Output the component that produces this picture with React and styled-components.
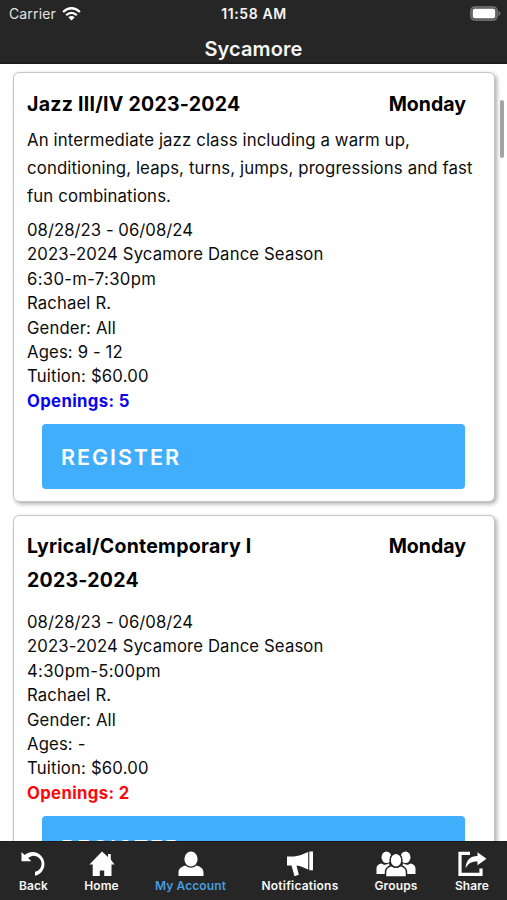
import React from "react";
import styled, { createGlobalStyle } from "styled-components";

const GlobalStyle = createGlobalStyle`
  * { box-sizing: border-box; }
  body { margin: 0; background: #fff; overflow: hidden; }
`;

const Screen = styled.div`
  display: flex;
  flex-direction: column;
  width: 507px;
  height: 900px;
  overflow: hidden;
  background: #fff;
  color: #0c0c0c;
  font-family: Inter, "Liberation Sans", sans-serif;
`;

const Header = styled.header`
  flex: none;
  height: 64px;
  background: #262626;
  border-bottom: 2px solid #1c1c1c;
  color: #f5f5f5;
`;

const StatusBar = styled.div`
  display: grid;
  grid-template-columns: 1fr auto 1fr;
  align-items: center;
  height: 27px;
  padding: 0 6px 0 9px;
  font-size: 14px;
`;

const Carrier = styled.div`
  display: flex;
  align-items: center;
  gap: 6px;
  letter-spacing: 0.14px;
  color: #e2e2e2;
`;

const Clock = styled.div`
  font-size: 14px;
  font-weight: 600;
  letter-spacing: 0.6px;
  margin-left: -2px;
`;

const Battery = styled.svg`
  justify-self: end;
  display: block;
`;

const Title = styled.h1`
  margin: 5px 0 0;
  text-align: center;
  font-size: 20px;
  line-height: 34px;
  font-weight: 600;
  letter-spacing: 0.1px;
`;

const Content = styled.main`
  position: relative;
  flex: 1;
  min-height: 0;
  overflow: hidden;
  padding: 8px 12px 0 13px;
`;

const ScrollThumb = styled.div`
  position: absolute;
  top: 36px;
  right: 3px;
  width: 4px;
  height: 58px;
  border-radius: 2px;
  background: #a3a3a3;
`;

const Card = styled.article`
  height: 430px;
  margin-bottom: 13px;
  padding: ${(p) => p.$top}px 20px 0 13px;
  border: 1px solid #c6c6c6;
  border-radius: 6px;
  background: #fff;
  box-shadow: 2px 2px 4px rgba(0, 0, 0, 0.32);
`;

const CardHead = styled.div`
  display: flex;
  justify-content: space-between;
  padding-right: 8px;
  font-size: 19.5px;
  line-height: 34px;
  font-weight: 700;
  color: #000;
`;

const ClassName = styled.h2`
  width: 250px;
  margin: 0;
  font: inherit;
  letter-spacing: 0.26px;
`;

const Day = styled.div`
  letter-spacing: 0;
`;

const Description = styled.p`
  margin: 5px 0 0;
  font-size: 16.8px;
  line-height: 28px;
  letter-spacing: 0.12px;
  white-space: nowrap;
  height: 84px;
`;

const Details = styled.div`
  margin-top: ${(p) => p.$gap}px;
  font-size: 16.7px;
  line-height: 24.4px;
`;

const Detail = styled.div`
  letter-spacing: ${(p) => p.$tracking ?? 0.14}px;
`;

const Openings = styled.div`
  font-weight: 700;
  letter-spacing: 0.36px;
  color: ${(p) => p.$color};
`;

const Register = styled.button`
  display: flex;
  align-items: center;
  width: 423px;
  height: 65px;
  margin: 11px 0 0 15px;
  padding: 0 19px ${(p) => p.$lift}px;
  border: 0;
  border-radius: 4px;
  background: #41aefc;
  color: #fff;
  font: 600 21.5px/30px Inter, sans-serif;
  letter-spacing: 1.95px;
`;

const TabBar = styled.nav`
  flex: none;
  display: grid;
  grid-template-columns: 67px 69px 109px 110px 82px 70px;
  height: 59px;
  background: #262626;
  border-top: 1px solid #1c1c1c;
`;

const Tab = styled.a`
  display: flex;
  flex-direction: column;
  align-items: center;
  padding-top: 9px;
  color: ${(p) => (p.$active ? "#469dde" : "#f7f7f7")};
  font-size: 12px;
  line-height: 16px;
  font-weight: 600;
  letter-spacing: ${(p) => p.$tracking}px;
  white-space: nowrap;
`;

const TabIcon = styled.svg`
  display: block;
  height: 26px;
  margin-bottom: 1px;
  fill: #fff;
`;

const WifiIcon = () => (
  <svg width="19" height="14" viewBox="0 0 19 14" fill="none" stroke="#fff" strokeWidth="2.3">
    <path d="M1.1 5 Q9.5 -2.6 17.9 5" />
    <path d="M4.2 8.2 Q9.5 3.6 14.8 8.2" />
    <path d="M6.3 10.2 Q9.5 7.6 12.7 10.2 L9.5 13.5Z" fill="#fff" stroke="none" />
  </svg>
);

const icons = {
  back: (
    <TabIcon width="26" viewBox="0 0 26 26">
      <path d="M.5 1 3.6 4A12 12 0 1 1 14 24.8V20.7A8 8 0 1 0 7.2 6.9L10.3 10.2H.5Z" />
    </TabIcon>
  ),
  home: (
    <TabIcon width="26" viewBox="0 0 26 26">
      <path d="M13 .5 19 6V3h2.8v5.6L25.5 13.5h-3V25h-7.3v-5.5h-4.4V25H3.7V13.5H.5Z" />
    </TabIcon>
  ),
  account: (
    <TabIcon width="26" viewBox="0 0 26 26">
      <ellipse cx="13" cy="8" rx="6.6" ry="7.6" />
      <path d="M.5 25v-3.5c0-4 3-5.7 7-7 3.5 3 7.5 3 11 0 4 1.3 7 3 7 7V25Z" />
    </TabIcon>
  ),
  notifications: (
    <TabIcon width="28" viewBox="0 0 28 26">
      <path d="M1 5.5h7C14 5 18 2.5 22.2 1v17.5C18 16.8 14.5 14.8 10.5 14.5l2.3 9.2L8.5 25.3 5.5 14.5H1ZM23.3.5H27v18.7h-3.7Z" />
    </TabIcon>
  ),
  groups: (
    <TabIcon width="40" viewBox="0 0 40 26">
      <ellipse cx="10.5" cy="6.3" rx="5" ry="5.8" />
      <ellipse cx="29.5" cy="6.3" rx="5" ry="5.8" />
      <path d="M.5 23v-5.5c0-3 2.5-4.5 5-5 3 2.2 5.5 1 7.5-.2L15 23ZM39.5 23v-5.5c0-3-2.5-4.5-5-5-3 2.2-5.5 1-7.5-.2L25 23Z" />
      <g stroke="#262626" strokeWidth="1.5">
        <path d="M9.5 26V21c0-4 2-5.3 6-6.4 3 2.2 6 2.2 9 0 4 1.1 6 2.4 6 6.4v5Z" />
        <ellipse cx="20" cy="9.3" rx="5.9" ry="7" />
      </g>
    </TabIcon>
  ),
  share: (
    <TabIcon width="30" viewBox="0 0 30 26">
      <path d="M13 2.3H3V23.3H24V17.5" fill="none" stroke="#fff" strokeWidth="3.2" />
      <path d="M20.5 1.2 29.5 7.7 20.5 14.3v-3.8c-5.5 0-9 1-12 7C9 9.5 13 5 20.5 5Z" />
    </TabIcon>
  ),
};

const tabs = [
  ["back", "Back", 0.05],
  ["home", "Home", 0.1],
  ["account", "My Account", 0.1],
  ["notifications", "Notifications", 0.2],
  ["groups", "Groups", 0.15],
  ["share", "Share", 0.1],
];

const classes = [
  {
    name: ["Jazz III/IV 2023-2024"],
    top: 14,
    gap: 8,
    description: [
      "An intermediate jazz class including a warm up,",
      "conditioning, leaps, turns, jumps, progressions and fast",
      "fun combinations.",
    ],
    time: "6:30-m-7:30pm",
    ages: "9 - 12",
    openings: 5,
    color: "#0a05ec",
    lift: 0,
  },
  {
    name: ["Lyrical/Contemporary I", "2023-2024"],
    top: 13,
    gap: 13,
    time: "4:30pm-5:00pm",
    ages: "-",
    openings: 2,
    color: "#f90a0a",
    lift: 2,
  },
];

function ClassCard({ item }) {
  return (
    <Card $top={item.top}>
      <CardHead>
        <ClassName>
          {item.name.map((line) => (
            <div key={line}>{line}</div>
          ))}
        </ClassName>
        <Day>Monday</Day>
      </CardHead>
      {item.description && (
        <Description>
          {item.description.map((line) => (
            <React.Fragment key={line}>
              {line}
              <br />
            </React.Fragment>
          ))}
        </Description>
      )}
      <Details $gap={item.gap}>
        <Detail $tracking={0.04}>08/28/23 - 06/08/24</Detail>
        <Detail>2023-2024 Sycamore Dance Season</Detail>
        <Detail $tracking={0.32}>{item.time}</Detail>
        <Detail>Rachael R.</Detail>
        <Detail>Gender: All</Detail>
        <Detail>Ages: {item.ages}</Detail>
        <Detail $tracking={0.18}>Tuition: $60.00</Detail>
        <Openings $color={item.color}>Openings: {item.openings}</Openings>
      </Details>
      <Register $lift={item.lift}>REGISTER</Register>
    </Card>
  );
}

export default function App() {
  return (
    <Screen>
      <GlobalStyle />
      <Header>
        <StatusBar>
          <Carrier>
            Carrier <WifiIcon />
          </Carrier>
          <Clock>11:58 AM</Clock>
          <Battery width="31" height="15" viewBox="0 0 31 15">
            <rect x=".8" y=".8" width="26.4" height="13.4" rx="4" fill="#555" stroke="#777" strokeWidth="1.2" />
            <rect x="2.8" y="2.8" width="22.4" height="9.4" rx="2" fill="#fff" />
            <path d="M28.5 5c2.5.8 2.5 4.2 0 5Z" fill="#777" />
          </Battery>
        </StatusBar>
        <Title>Sycamore</Title>
      </Header>
      <Content>
        {classes.map((item) => (
          <ClassCard key={item.name[0]} item={item} />
        ))}
        <ScrollThumb />
      </Content>
      <TabBar>
        {tabs.map(([id, label, tracking]) => (
          <Tab key={id} $active={id === "account"} $tracking={tracking}>
            {icons[id]}
            {label}
          </Tab>
        ))}
      </TabBar>
    </Screen>
  );
}
